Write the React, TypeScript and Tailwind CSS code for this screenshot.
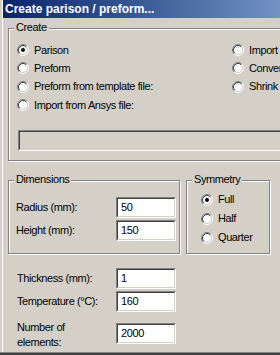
import React from "react";

function Radio({ checked = false }: { checked?: boolean }) {
  return (
    <svg width="12" height="12" viewBox="0 0 12 12" className="shrink-0 block">
      <circle cx="6" cy="6" r="4" fill="#ffffff" />
      <path d="M2.11 9.89 A5.5 5.5 0 0 1 9.89 2.11" stroke="#808080" fill="none" />
      <path d="M9.89 2.11 A5.5 5.5 0 0 1 2.11 9.89" stroke="#ffffff" fill="none" />
      <path d="M2.82 9.18 A4.5 4.5 0 0 1 9.18 2.82" stroke="#404040" fill="none" />
      <path d="M9.18 2.82 A4.5 4.5 0 0 1 2.82 9.18" stroke="#d4d0c8" fill="none" />
      {checked && <circle cx="6" cy="6" r="2" fill="#000000" />}
    </svg>
  );
}

function RadioRow({ label, checked, h }: { label: string; checked?: boolean; h: string }) {
  return (
    <div className={`flex items-center gap-[5px] whitespace-nowrap ${h}`}>
      <Radio checked={checked} />
      <span>{label}</span>
    </div>
  );
}

function Field({ value, className = "w-[60px]", disabled = false }: { value?: string; className?: string; disabled?: boolean }) {
  return (
    <div className={`h-[21px] shrink-0 border border-t-[#808080] border-l-[#808080] border-b-white border-r-white ${className}`}>
      <div
        className={`h-full border border-t-[#404040] border-l-[#404040] border-b-[#d4d0c8] border-r-[#d4d0c8] flex items-center pl-[3px] ${
          disabled ? "bg-[#d4d0c8]" : "bg-white"
        }`}
      >
        {value}
      </div>
    </div>
  );
}

function GroupLabel({ text }: { text: string }) {
  return (
    <div className="absolute -top-[8px] left-[5px] px-[2px] bg-[#d4d0c8] leading-[13px] whitespace-nowrap">
      {text}
    </div>
  );
}

const groupCls =
  "relative border border-[#808080] shadow-[inset_1px_1px_0_#ffffff,1px_1px_0_#ffffff] shrink-0";

export default function App() {
  return (
    <div className="w-[280px] h-[355px] overflow-hidden bg-[#d4d0c8] flex flex-col text-[11px] tracking-[-0.4px] text-black font-['Liberation_Sans',Arial,sans-serif]">
      <div className="flex flex-1 min-h-0">
        <div className="w-[2px] bg-[#d4d0c8] shrink-0" />
        <div className="w-[1px] bg-white shrink-0" />
        <div className="flex-1 min-w-0 flex flex-col overflow-hidden">
          {/* Title bar */}
          <div className="h-[18px] shrink-0 flex items-center pl-[2px] bg-gradient-to-r from-[#0a246a] to-[#7293c3] text-white font-bold text-[12px] tracking-normal whitespace-nowrap">
            Create parison / preform...
          </div>

          {/* Create group */}
          <div className={`${groupCls} mt-[10px] ml-[5px] w-[420px] h-[133px] pl-[8px] pt-[12px]`}>
            <GroupLabel text="Create" />
            <div className="flex">
              <div className="w-[215px] shrink-0 flex flex-col">
                <RadioRow label="Parison" checked h="h-[18px]" />
                <RadioRow label="Preform" h="h-[18px]" />
                <RadioRow label="Preform from template file:" h="h-[19px]" />
                <RadioRow label="Import from Ansys file:" h="h-[18px]" />
              </div>
              <div className="flex flex-col">
                <RadioRow label="Import" h="h-[18px]" />
                <RadioRow label="Convert" h="h-[18px]" />
                <RadioRow label="Shrink" h="h-[19px]" />
              </div>
            </div>
            <div className="mt-[16px] ml-[1px]">
              <Field className="w-[380px]" disabled />
            </div>
          </div>

          {/* Dimensions + Symmetry */}
          <div className="flex mt-[19px] ml-[5px] shrink-0">
            <div className={`${groupCls} w-[172px] h-[74px] pl-[7px] pt-[16px] flex flex-col gap-[2px]`}>
              <GroupLabel text="Dimensions" />
              <div className="flex items-center">
                <div className="w-[100px] shrink-0">Radius (mm):</div>
                <Field value="50" />
              </div>
              <div className="flex items-center">
                <div className="w-[100px] shrink-0">Height (mm):</div>
                <Field value="150" />
              </div>
            </div>
            <div className={`${groupCls} ml-[6px] w-[84px] h-[74px] pl-[14px] pt-[9px] flex flex-col`}>
              <GroupLabel text="Symmetry" />
              <RadioRow label="Full" checked h="h-[19px]" />
              <RadioRow label="Half" h="h-[19px]" />
              <RadioRow label="Quarter" h="h-[19px]" />
            </div>
          </div>

          {/* Bottom fields */}
          <div className="flex flex-col mt-[14px] pl-[14px] shrink-0">
            <div className="flex items-center">
              <div className="w-[99px] shrink-0">Thickness (mm):</div>
              <Field value="1" />
            </div>
            <div className="flex items-center mt-[2px]">
              <div className="w-[99px] shrink-0">Temperature (°C):</div>
              <Field value="160" />
            </div>
            <div className="flex items-start mt-[8px]">
              <div className="w-[99px] shrink-0 leading-[15px]">
                Number of
                <br />
                elements:
              </div>
              <div className="mt-[3px]">
                <Field value="2000" />
              </div>
            </div>
          </div>
        </div>
      </div>
      <div className="h-[1px] bg-[#808080] shrink-0" />
      <div className="h-[2px] bg-[#404040] shrink-0" />
    </div>
  );
}
